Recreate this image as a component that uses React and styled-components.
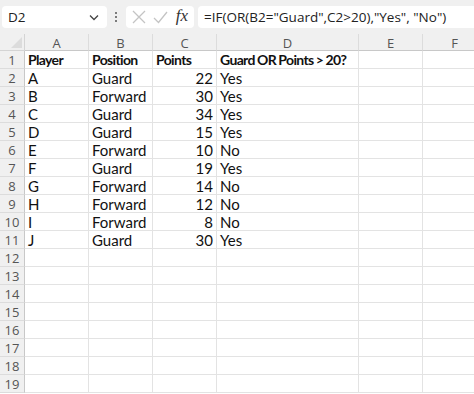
import React from 'react';
import styled, { createGlobalStyle } from 'styled-components';

const GlobalStyle = createGlobalStyle`
  html, body {
    margin: 0;
    padding: 0;
    background: #ffffff;
    overflow: hidden;
  }
  * { box-sizing: border-box; }
`;

const Page = styled.div`
  width: 474px;
  height: 394px;
  overflow: hidden;
  background: #fff;
  font-family: Lato, 'Noto Sans', sans-serif;
`;

const FormulaBar = styled.div`
  height: 34px;
  background: #f0f0f0;
  display: flex;
  align-items: center;
  padding: 0 0 0 2px;
  gap: 4px;
`;

const NameBox = styled.div`
  width: 105px;
  height: 22px;
  background: #fff;
  border-radius: 4px;
  display: flex;
  align-items: center;
  justify-content: space-between;
  padding: 0 8px 0 6px;
  font-family: 'Open Sans', sans-serif;
  font-size: 13.5px;
  color: #222;
`;

const Dots = styled.div`
  width: 8px;
  display: flex;
  flex-direction: column;
  align-items: center;
  gap: 2px;
  margin: 0 2px 0 1px;

  span {
    width: 2px;
    height: 2px;
    border-radius: 1px;
    background: #555;
  }
`;

const FxBox = styled.div`
  width: 68px;
  height: 22px;
  background: #fff;
  border-radius: 4px;
  display: flex;
  align-items: center;
  justify-content: space-between;
  padding: 0 6px 0 6px;
`;

const Fx = styled.span`
  font-family: 'Liberation Serif', serif;
  font-style: italic;
  font-size: 17px;
  color: #333;
  margin-top: -2px;
`;

const FormulaInput = styled.div`
  flex: 1;
  height: 22px;
  background: #fff;
  border-radius: 4px 0 0 4px;
  display: flex;
  align-items: center;
  padding-left: 6px;
  font-family: 'Open Sans', sans-serif;
  font-size: 13.5px;
  color: #222;
  white-space: nowrap;
`;

const Grid = styled.div`
  display: grid;
  grid-template-columns: 25px 64px 64px 64px 142px 64px 64px;
  grid-template-rows: 17px repeat(19, 18px);
`;

const Corner = styled.div`
  background: #f0f0f0;
  border-right: 1px solid #d4d4d4;
  border-bottom: 1px solid #d4d4d4;
  position: relative;

  &::after {
    content: '';
    position: absolute;
    right: 2px;
    bottom: 2px;
    width: 0;
    height: 0;
    border-left: 11px solid transparent;
    border-bottom: 11px solid #dcdcdc;
  }
`;

const ColHead = styled.div`
  background: #f0f0f0;
  border-right: 1px solid #dcdcdc;
  border-bottom: 1px solid #c8c8c8;
  display: flex;
  align-items: center;
  justify-content: center;
  font-family: 'Open Sans', sans-serif;
  font-size: 13px;
  color: #555;
  padding-top: 1px;
`;

const RowHead = styled.div`
  background: #f0f0f0;
  border-right: 1px solid #c8c8c8;
  border-bottom: 1px solid #dcdcdc;
  display: flex;
  align-items: center;
  justify-content: center;
  font-family: 'Open Sans', sans-serif;
  font-size: 13px;
  color: #555;
`;

const Cell = styled.div`
  border-right: 1px solid #e3e3e3;
  border-bottom: 1px solid #e3e3e3;
  display: flex;
  align-items: center;
  justify-content: ${p => (p.$num ? 'flex-end' : 'flex-start')};
  padding: 0 3px;
  font-size: ${p => (p.$bold ? '14px' : '15px')};
  font-weight: ${p => (p.$bold ? 700 : 400)};
  letter-spacing: ${p => (p.$bold ? '-0.65px' : '0')};
  word-spacing: ${p => (p.$bold ? '-0.5px' : '0')};
  color: #111;
  white-space: nowrap;
  overflow: visible;
`;

const XIcon = () => (
  <svg width="14" height="14" viewBox="0 0 14 14">
    <path d="M1 1 L13 13 M13 1 L1 13" stroke="#c4c4c4" strokeWidth="1.3" fill="none" />
  </svg>
);

const CheckIcon = () => (
  <svg width="15" height="13" viewBox="0 0 15 13">
    <path d="M1 7 L5.5 11.5 L14 1" stroke="#c4c4c4" strokeWidth="1.3" fill="none" />
  </svg>
);

const Chevron = () => (
  <svg width="10" height="7" viewBox="0 0 10 7">
    <path d="M1 1.5 L5 5.5 L9 1.5" stroke="#444" strokeWidth="1.3" fill="none" />
  </svg>
);

const cols = ['A', 'B', 'C', 'D', 'E', 'F'];

const data = [
  ['A', 'Guard', 22, 'Yes'],
  ['B', 'Forward', 30, 'Yes'],
  ['C', 'Guard', 34, 'Yes'],
  ['D', 'Guard', 15, 'Yes'],
  ['E', 'Forward', 10, 'No'],
  ['F', 'Guard', 19, 'Yes'],
  ['G', 'Forward', 14, 'No'],
  ['H', 'Forward', 12, 'No'],
  ['I', 'Forward', 8, 'No'],
  ['J', 'Guard', 30, 'Yes'],
];

const App = () => {
  const rows = [];
  for (let r = 1; r <= 19; r++) {
    rows.push(<RowHead key={'h' + r}>{r}</RowHead>);
    if (r === 1) {
      rows.push(<Cell key="1a" $bold>Player</Cell>);
      rows.push(<Cell key="1b" $bold>Position</Cell>);
      rows.push(<Cell key="1c" $bold>Points</Cell>);
      rows.push(<Cell key="1d" $bold>Guard OR Points &gt; 20?</Cell>);
      rows.push(<Cell key="1e" />);
      rows.push(<Cell key="1f" />);
    } else if (r <= 11) {
      const d = data[r - 2];
      rows.push(<Cell key={r + 'a'}>{d[0]}</Cell>);
      rows.push(<Cell key={r + 'b'}>{d[1]}</Cell>);
      rows.push(<Cell key={r + 'c'} $num>{d[2]}</Cell>);
      rows.push(<Cell key={r + 'd'}>{d[3]}</Cell>);
      rows.push(<Cell key={r + 'e'} />);
      rows.push(<Cell key={r + 'f'} />);
    } else {
      cols.forEach(c => rows.push(<Cell key={r + c} />));
    }
  }

  return (
    <>
      <GlobalStyle />
      <Page>
        <FormulaBar>
          <NameBox>
            D2
            <Chevron />
          </NameBox>
          <Dots>
            <span />
            <span />
            <span />
          </Dots>
          <FxBox>
            <XIcon />
            <CheckIcon />
            <Fx>fx</Fx>
          </FxBox>
          <FormulaInput>=IF(OR(B2="Guard",C2&gt;20),"Yes", "No")</FormulaInput>
        </FormulaBar>
        <Grid>
          <Corner />
          {cols.map(c => (
            <ColHead key={c}>{c}</ColHead>
          ))}
          {rows}
        </Grid>
      </Page>
    </>
  );
};

export default App;
